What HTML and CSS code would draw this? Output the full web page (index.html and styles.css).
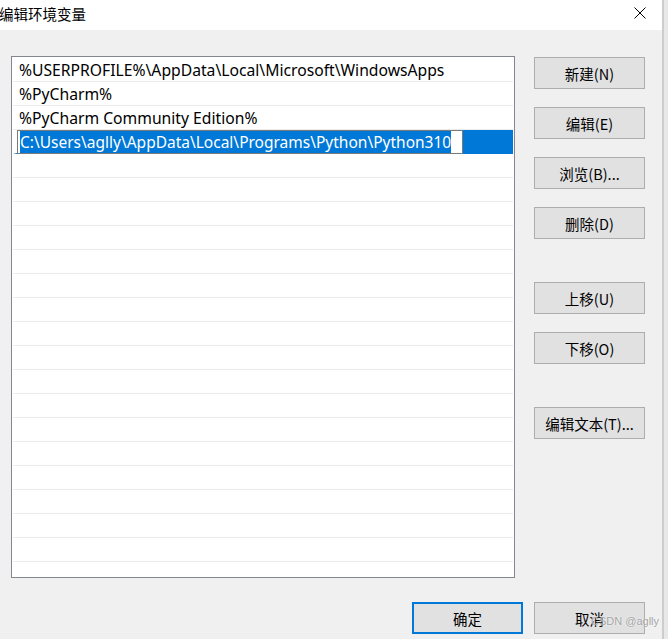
FILE: index.html
```html
<!DOCTYPE html>
<html lang="zh-CN">
<head>
  <meta charset="UTF-8" />
  <title>编辑环境变量</title>
  <link rel="stylesheet" href="styles.css">
</head>
<body>
  <div class="window">
    <div class="titlebar">
      <span class="title">编辑环境变量</span>
      <svg class="close" width="12" height="12" viewBox="0 0 12 12">
        <path d="M0.5 0.5 L11.5 11.5 M11.5 0.5 L0.5 11.5" stroke="#000" stroke-width="1" fill="none"/>
      </svg>
    </div>

    <div class="content">
      <div class="listbox">
        <div class="row">%USERPROFILE%\AppData\Local\Microsoft\WindowsApps</div>
        <div class="row">%PyCharm%</div>
        <div class="row">%PyCharm Community Edition%</div>
        <div class="row selected">
          <div class="editbox"><span class="sel">C:\Users\aglly\AppData\Local\Programs\Python\Python310</span></div>
        </div>
        <div class="row"></div><div class="row"></div><div class="row"></div><div class="row"></div>
        <div class="row"></div><div class="row"></div><div class="row"></div><div class="row"></div>
        <div class="row"></div><div class="row"></div><div class="row"></div><div class="row"></div>
        <div class="row"></div><div class="row"></div><div class="row"></div><div class="row"></div>
        <div class="row"></div><div class="row"></div>
      </div>

      <div class="buttons">
        <button class="btn">新建(N)</button>
        <button class="btn">编辑(E)</button>
        <button class="btn">浏览(B)...</button>
        <button class="btn">删除(D)</button>
        <button class="btn group">上移(U)</button>
        <button class="btn">下移(O)</button>
        <button class="btn group">编辑文本(T)...</button>
      </div>
    </div>

    <div class="footer">
      <button class="btn default">确定</button>
      <button class="btn">取消</button>
      <span class="watermark">CSDN @aglly</span>
    </div>
  </div>
</body>
</html>
```

FILE: styles.css
```css
body {
  margin: 0;
  background: #e8e8e8;
  font-family: "Noto Sans", "Noto Sans CJK SC", sans-serif;
  color: #000;
}
.window {
  width: 664px;
  height: 639px;
  background: #f0f0f0;
  border-right: 2px solid #cdcdcd;
  box-sizing: border-box;
  position: relative;
  overflow: hidden;
}
.titlebar {
  height: 30px;
  background: #fff;
  display: flex;
  align-items: center;
  justify-content: space-between;
}
.title {
  font-family: "Noto Sans CJK SC", sans-serif;
  font-size: 14.5px;
  margin-left: -1px;
  margin-top: -3px;
}
.close {
  margin-right: 16px;
  margin-top: -5px;
}
.content {
  display: flex;
  align-items: flex-start;
  padding: 26px 0 0 11px;
}
.listbox {
  width: 504px;
  height: 522px;
  box-sizing: border-box;
  border: 1px solid #828790;
  background: #fff;
  padding: 1px;
  overflow: hidden;
}
.row {
  height: 24px;
  box-sizing: border-box;
  border-bottom: 1px solid #ebebeb;
  padding: 2px 0 0 6px;
  font-size: 15.7px;
  line-height: 21px;
  white-space: nowrap;
}
.row.selected {
  background: #0078d7;
  border-left: 4px solid #fff;
  border-bottom-color: #0078d7;
  padding: 0;
}
.editbox {
  width: 446px;
  height: 24px;
  box-sizing: border-box;
  border: 1px solid #7a7a7a;
  background: #fff;
  padding: 1px 0 0 2px;
  line-height: 20px;
  font-size: 15.5px;
}
.sel {
  background: #0078d7;
  color: #fff;
}
.buttons {
  display: flex;
  flex-direction: column;
  gap: 18px;
  margin-left: 19px;
  padding-top: 1px;
}
.buttons .group {
  margin-top: 25px;
}
.btn {
  width: 111px;
  height: 32px;
  box-sizing: border-box;
  background: #e1e1e1;
  border: 1px solid #adadad;
  font-family: "Noto Sans CJK SC", sans-serif;
  font-size: 14.5px;
  color: #000;
  padding: 0;
}
.btn.default {
  border: 2px solid #0078d7;
}
.footer {
  display: flex;
  gap: 11px;
  padding: 24px 0 0 412px;
}
.watermark {
  position: absolute;
  left: 591px;
  top: 615px;
  white-space: nowrap;
  font-family: "Liberation Sans", sans-serif;
  font-size: 11px;
  color: #a5a5a5;
  text-shadow: 0 0 2px #fff;
}
```
